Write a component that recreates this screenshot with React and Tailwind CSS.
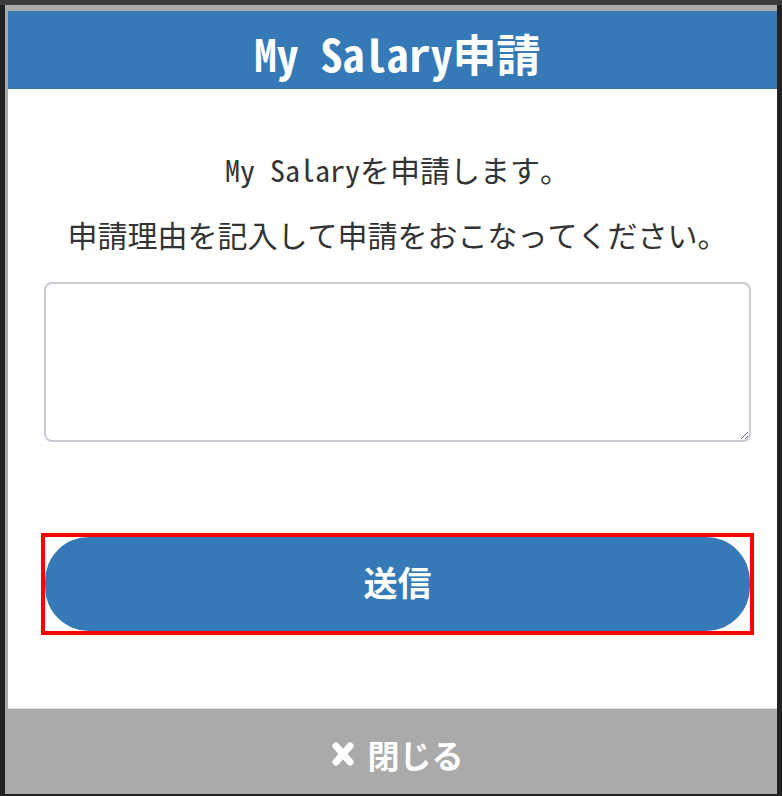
import React from "react";

const mono = { fontFamily: '"Noto Sans Mono CJK JP", "Liberation Mono", "Noto Sans CJK JP", monospace' };

function CloseMark() {
  return (
    <svg width="24" height="26" viewBox="0 0 24 26" className="mr-[12px]">
      <path d="M5 5 L19 21 M19 5 L5 21" stroke="white" strokeWidth="7" strokeLinecap="round" fill="none" />
    </svg>
  );
}

export default function App() {
  return (
    <div className="h-[796px] w-[782px] bg-[#222] flex flex-col">
      <div className="h-[5px] bg-[#3c3c3c]" />
      <div className="ml-[5px] mr-[5px] flex-1 flex flex-col bg-[#aaa] pt-[6px] pl-[3px] mb-[2px]">
        {/* Header */}
        <div
          className="h-[78px] bg-[#357ab7] text-white text-[44px] font-bold flex items-center justify-center pt-[6px] pl-[36px] pr-[26px]"
          style={mono}
        >
          My Salary申請
        </div>

        {/* Body */}
        <div className="flex-1 bg-white flex flex-col pl-[36px] pr-[26px] border-b border-[#ddd]">
          <div className="text-[#333] text-[30px] text-center pt-[60px] leading-[40px]" style={mono}>
            <p>My Salaryを申請します。</p>
            <p className="mt-[25px]">申請理由を記入して申請をおこなってください。</p>
          </div>
          <textarea className="mt-[28px] h-[160px] w-full border-2 border-[#c6ccd2] rounded-[8px] resize-y outline-none" />
          <div className="mt-[91px] mx-[-3px] border-4 border-[#ff0000]">
            <button
              className="w-full h-[94px] rounded-[44px] bg-[#357ab7] text-white text-[34px] font-bold pb-[6px]"
              style={{ fontFamily: '"Noto Sans CJK JP", "Liberation Sans", sans-serif' }}
            >
              送信
            </button>
          </div>
        </div>

        {/* Footer */}
        <div
          className="h-[85px] bg-[#aaa] text-white text-[32px] font-bold flex items-center justify-center pl-[36px] pr-[26px] pt-[4px]"
          style={{ fontFamily: '"Noto Sans CJK JP", "Liberation Sans", sans-serif' }}
        >
          <CloseMark />
          閉じる
        </div>
      </div>
    </div>
  );
}
